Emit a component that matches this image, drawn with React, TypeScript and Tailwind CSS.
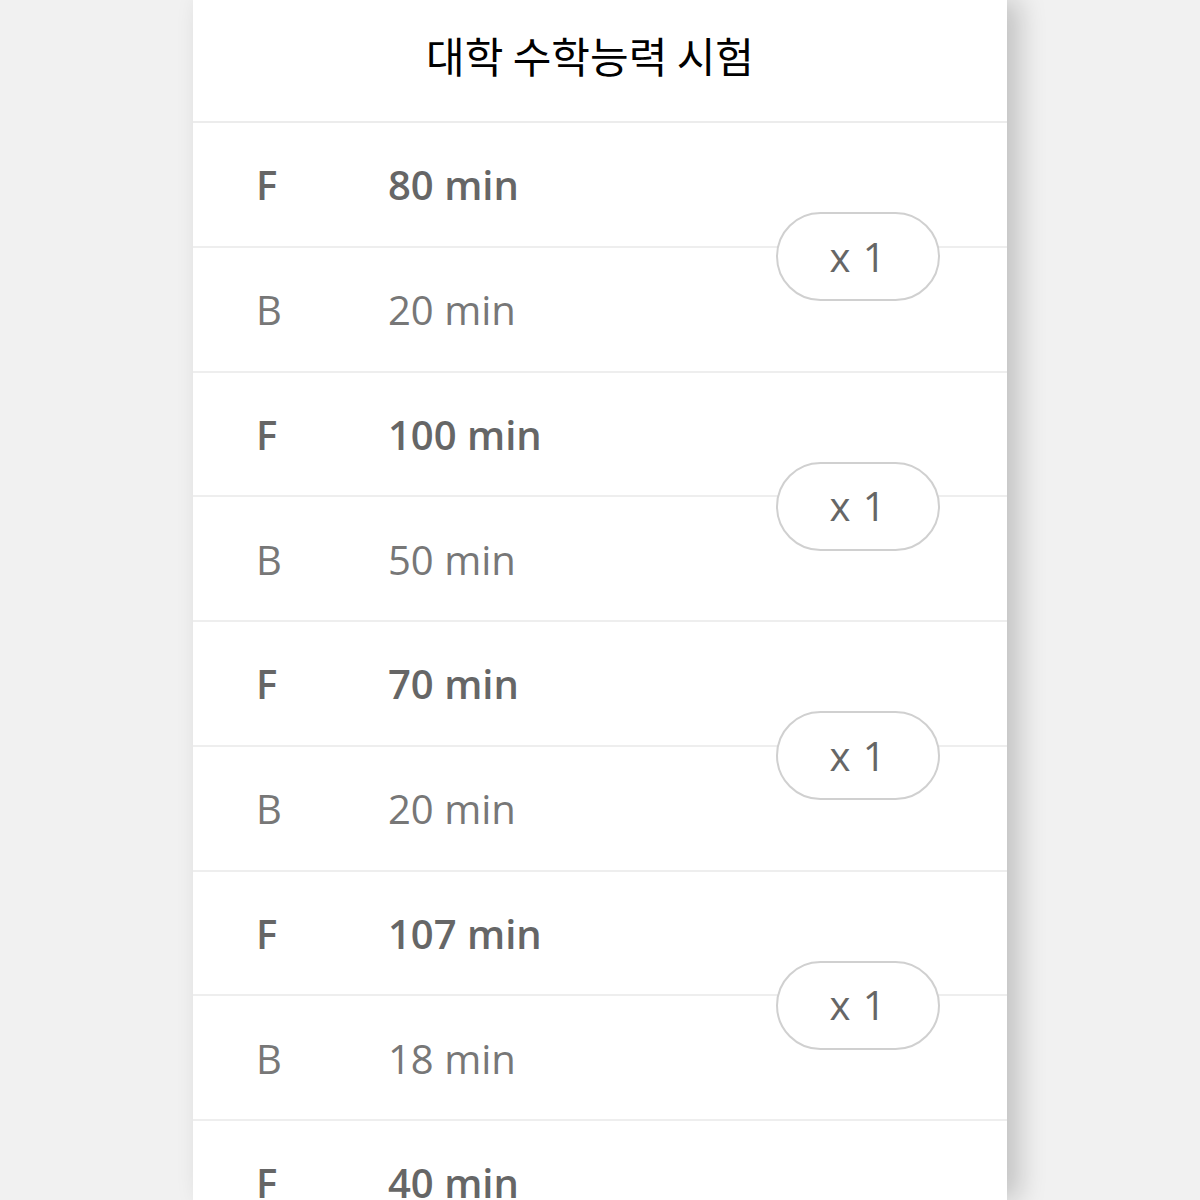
import React from "react";

const groups = [
  { f: "80 min", b: "20 min" },
  { f: "100 min", b: "50 min" },
  { f: "70 min", b: "20 min" },
  { f: "107 min", b: "18 min" },
  { f: "40 min", b: "10 min" },
];

const sans = { fontFamily: '"Open Sans", "Noto Sans", sans-serif' };

function Row({ label, value, bold }: { label: string; value: string; bold?: boolean }) {
  return (
    <div
      className={`flex h-[124.75px] items-center border-b-2 border-[#eeeeee] pl-[63px] text-[40px] ${
        bold ? "font-semibold text-[#666666]" : "font-normal text-[#777777]"
      }`}
      style={sans}
    >
      <span className="w-[132px] pt-[2px]">{label}</span>
      <span className="pt-[2px]">{value}</span>
    </div>
  );
}

export default function App() {
  return (
    <div className="flex h-[1200px] w-full justify-center overflow-hidden bg-[#f1f1f1]">
      <div className="w-[814px] shrink-0 bg-white shadow-[12px_0_26px_rgba(0,0,0,0.2)]">
        <div className="flex h-[123px] items-center justify-center border-b-2 border-[#ececec] pb-[12px] pr-[20px]">
          <h1
            className="text-[42px] font-normal text-black"
            style={{ fontFamily: '"Noto Sans CJK KR", "Noto Sans", sans-serif' }}
          >
            대학 수학능력 시험
          </h1>
        </div>
        {groups.map((g, i) => (
          <div key={i} className="relative">
            <Row label="F" value={g.f} bold />
            <Row label="B" value={g.b} />
            <div
              className="absolute right-[67px] top-[89px] flex h-[89px] w-[164px] items-center justify-center rounded-full border-2 border-[#d0d0d0] bg-white text-[40px] tracking-[1px] text-[#666666]"
              style={sans}
            >
              x 1
            </div>
          </div>
        ))}
      </div>
    </div>
  );
}
